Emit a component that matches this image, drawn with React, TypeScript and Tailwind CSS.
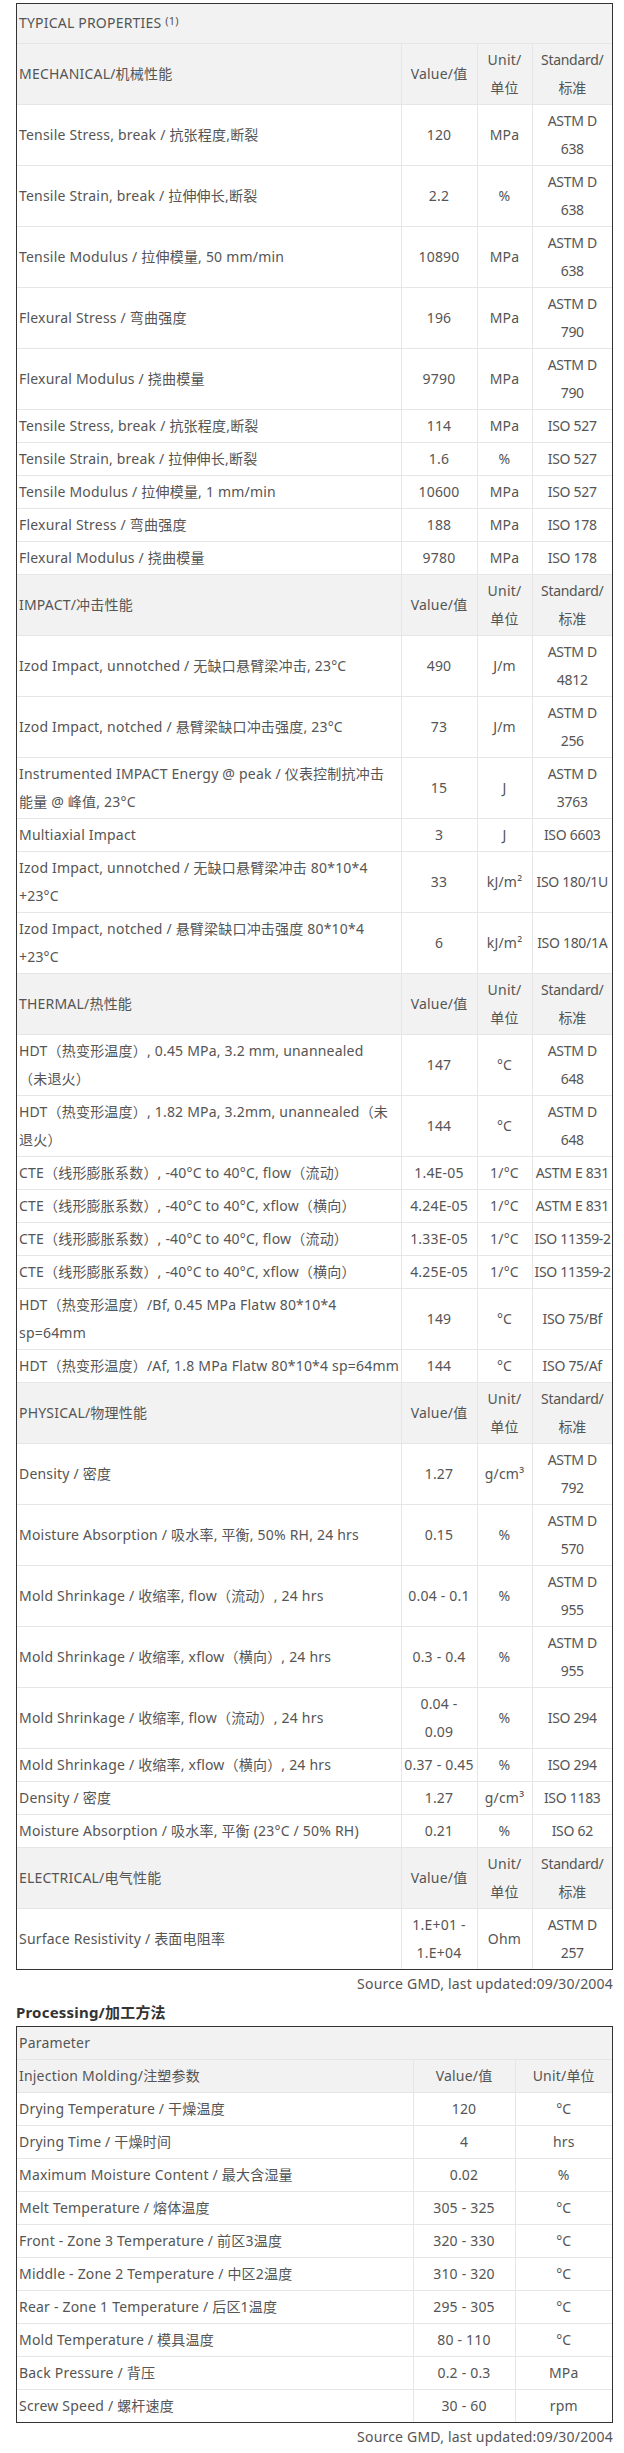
import React from "react";

type Row = [string, string, string, string];

type Section = {
  title: string;
  rows: Row[];
};

const sections: Section[] = [
  {
    title: "MECHANICAL/机械性能",
    rows: [
      ["Tensile Stress, break / 抗张程度,断裂", "120", "MPa", "ASTM D\n638"],
      ["Tensile Strain, break / 拉伸伸长,断裂", "2.2", "%", "ASTM D\n638"],
      ["Tensile Modulus / 拉伸模量, 50 mm/min", "10890", "MPa", "ASTM D\n638"],
      ["Flexural Stress / 弯曲强度", "196", "MPa", "ASTM D\n790"],
      ["Flexural Modulus / 挠曲模量", "9790", "MPa", "ASTM D\n790"],
      ["Tensile Stress, break / 抗张程度,断裂", "114", "MPa", "ISO 527"],
      ["Tensile Strain, break / 拉伸伸长,断裂", "1.6", "%", "ISO 527"],
      ["Tensile Modulus / 拉伸模量, 1 mm/min", "10600", "MPa", "ISO 527"],
      ["Flexural Stress / 弯曲强度", "188", "MPa", "ISO 178"],
      ["Flexural Modulus / 挠曲模量", "9780", "MPa", "ISO 178"],
    ],
  },
  {
    title: "IMPACT/冲击性能",
    rows: [
      ["Izod Impact, unnotched / 无缺口悬臂梁冲击, 23°C", "490", "J/m", "ASTM D\n4812"],
      ["Izod Impact, notched / 悬臂梁缺口冲击强度, 23°C", "73", "J/m", "ASTM D\n256"],
      [
        "Instrumented IMPACT Energy @ peak / 仪表控制抗冲击\n能量 @ 峰值, 23°C",
        "15",
        "J",
        "ASTM D\n3763",
      ],
      ["Multiaxial Impact", "3", "J", "ISO 6603"],
      ["Izod Impact, unnotched / 无缺口悬臂梁冲击 80*10*4\n+23°C", "33", "kJ/m²", "ISO 180/1U"],
      ["Izod Impact, notched / 悬臂梁缺口冲击强度 80*10*4\n+23°C", "6", "kJ/m²", "ISO 180/1A"],
    ],
  },
  {
    title: "THERMAL/热性能",
    rows: [
      ["HDT（热变形温度）, 0.45 MPa, 3.2 mm, unannealed\n（未退火）", "147", "°C", "ASTM D\n648"],
      ["HDT（热变形温度）, 1.82 MPa, 3.2mm, unannealed（未\n退火）", "144", "°C", "ASTM D\n648"],
      ["CTE（线形膨胀系数）, -40°C to 40°C, flow（流动）", "1.4E-05", "1/°C", "ASTM E 831"],
      ["CTE（线形膨胀系数）, -40°C to 40°C, xflow（横向）", "4.24E-05", "1/°C", "ASTM E 831"],
      ["CTE（线形膨胀系数）, -40°C to 40°C, flow（流动）", "1.33E-05", "1/°C", "ISO 11359-2"],
      ["CTE（线形膨胀系数）, -40°C to 40°C, xflow（横向）", "4.25E-05", "1/°C", "ISO 11359-2"],
      ["HDT（热变形温度）/Bf, 0.45 MPa Flatw 80*10*4\nsp=64mm", "149", "°C", "ISO 75/Bf"],
      ["HDT（热变形温度）/Af, 1.8 MPa Flatw 80*10*4 sp=64mm", "144", "°C", "ISO 75/Af"],
    ],
  },
  {
    title: "PHYSICAL/物理性能",
    rows: [
      ["Density / 密度", "1.27", "g/cm³", "ASTM D\n792"],
      ["Moisture Absorption / 吸水率, 平衡, 50% RH, 24 hrs", "0.15", "%", "ASTM D\n570"],
      ["Mold Shrinkage / 收缩率, flow（流动）, 24 hrs", "0.04 - 0.1", "%", "ASTM D\n955"],
      ["Mold Shrinkage / 收缩率, xflow（横向）, 24 hrs", "0.3 - 0.4", "%", "ASTM D\n955"],
      ["Mold Shrinkage / 收缩率, flow（流动）, 24 hrs", "0.04 -\n0.09", "%", "ISO 294"],
      ["Mold Shrinkage / 收缩率, xflow（横向）, 24 hrs", "0.37 - 0.45", "%", "ISO 294"],
      ["Density / 密度", "1.27", "g/cm³", "ISO 1183"],
      ["Moisture Absorption / 吸水率, 平衡 (23°C / 50% RH)", "0.21", "%", "ISO 62"],
    ],
  },
  {
    title: "ELECTRICAL/电气性能",
    rows: [["Surface Resistivity / 表面电阻率", "1.E+01 -\n1.E+04", "Ohm", "ASTM D\n257"]],
  },
];

const processing: [string, string, string][] = [
  ["Drying Temperature / 干燥温度", "120", "°C"],
  ["Drying Time / 干燥时间", "4", "hrs"],
  ["Maximum Moisture Content / 最大含湿量", "0.02", "%"],
  ["Melt Temperature / 熔体温度", "305 - 325", "°C"],
  ["Front - Zone 3 Temperature / 前区3温度", "320 - 330", "°C"],
  ["Middle - Zone 2 Temperature / 中区2温度", "310 - 320", "°C"],
  ["Rear - Zone 1 Temperature / 后区1温度", "295 - 305", "°C"],
  ["Mold Temperature / 模具温度", "80 - 110", "°C"],
  ["Back Pressure / 背压", "0.2 - 0.3", "MPa"],
  ["Screw Speed / 螺杆速度", "30 - 60", "rpm"],
];

const td = "border border-[#e6e6e6] px-[2px] py-[2px] align-middle whitespace-pre";
// standard column is narrow, "ISO 11359-2" has to fit on one line
const tdStd = td + " text-center px-0 tracking-[-0.3px]";

export default function App() {
  return (
    <div className="min-h-[2453px] bg-white pt-[3px] pb-1 font-['Noto_Sans','Noto_Sans_CJK_SC',sans-serif] text-[14px] leading-7 tracking-[0.2px] text-[#555]">
      {/* Typical properties */}
      <div className="ml-4 w-[597px] border border-[#333]">
        <table className="w-full table-fixed border-collapse border-hidden">
          <colgroup>
            <col className="w-[384px]" />
            <col className="w-[76px]" />
            <col className="w-[55px]" />
            <col />
          </colgroup>
          <tbody>
            <tr className="h-[39px] bg-[#f2f2f2]">
              <td colSpan={4} className={td}>
                TYPICAL PROPERTIES{" "}
                <sup className="relative -top-[3px] text-[11px]">(1)</sup>
              </td>
            </tr>
            {sections.map((s) => (
              <React.Fragment key={s.title}>
                <tr className="bg-[#f2f2f2]">
                  <td className={td}>{s.title}</td>
                  <td className={td + " text-center"}>Value/值</td>
                  <td className={td + " text-center"}>{"Unit/\n单位"}</td>
                  <td className={tdStd}>{"Standard/\n标准"}</td>
                </tr>
                {s.rows.map((r, i) => (
                  <tr key={i}>
                    <td className={td}>{r[0]}</td>
                    <td className={td + " text-center"}>{r[1]}</td>
                    <td className={td + " text-center"}>{r[2]}</td>
                    <td className={tdStd}>{r[3]}</td>
                  </tr>
                ))}
              </React.Fragment>
            ))}
          </tbody>
        </table>
      </div>
      <p className="w-[613px] text-right">Source GMD, last updated:09/30/2004</p>

      {/* Processing */}
      <h3 className="ml-4 text-[15px] font-bold text-[#333]">Processing/加工方法</h3>
      <div className="ml-4 w-[597px] border border-[#333]">
        <table className="w-full table-fixed border-collapse border-hidden">
          <colgroup>
            <col className="w-[396px]" />
            <col className="w-[102px]" />
            <col />
          </colgroup>
          <tbody>
            <tr className="bg-[#f2f2f2]">
              <td colSpan={3} className={td}>
                Parameter
              </td>
            </tr>
            <tr className="bg-[#f2f2f2]">
              <td className={td}>Injection Molding/注塑参数</td>
              <td className={td + " text-center"}>Value/值</td>
              <td className={td + " text-center"}>Unit/单位</td>
            </tr>
            {processing.map((r, i) => (
              <tr key={i}>
                <td className={td}>{r[0]}</td>
                <td className={td + " text-center"}>{r[1]}</td>
                <td className={td + " text-center"}>{r[2]}</td>
              </tr>
            ))}
          </tbody>
        </table>
      </div>
      <p className="w-[613px] text-right">Source GMD, last updated:09/30/2004</p>
    </div>
  );
}
